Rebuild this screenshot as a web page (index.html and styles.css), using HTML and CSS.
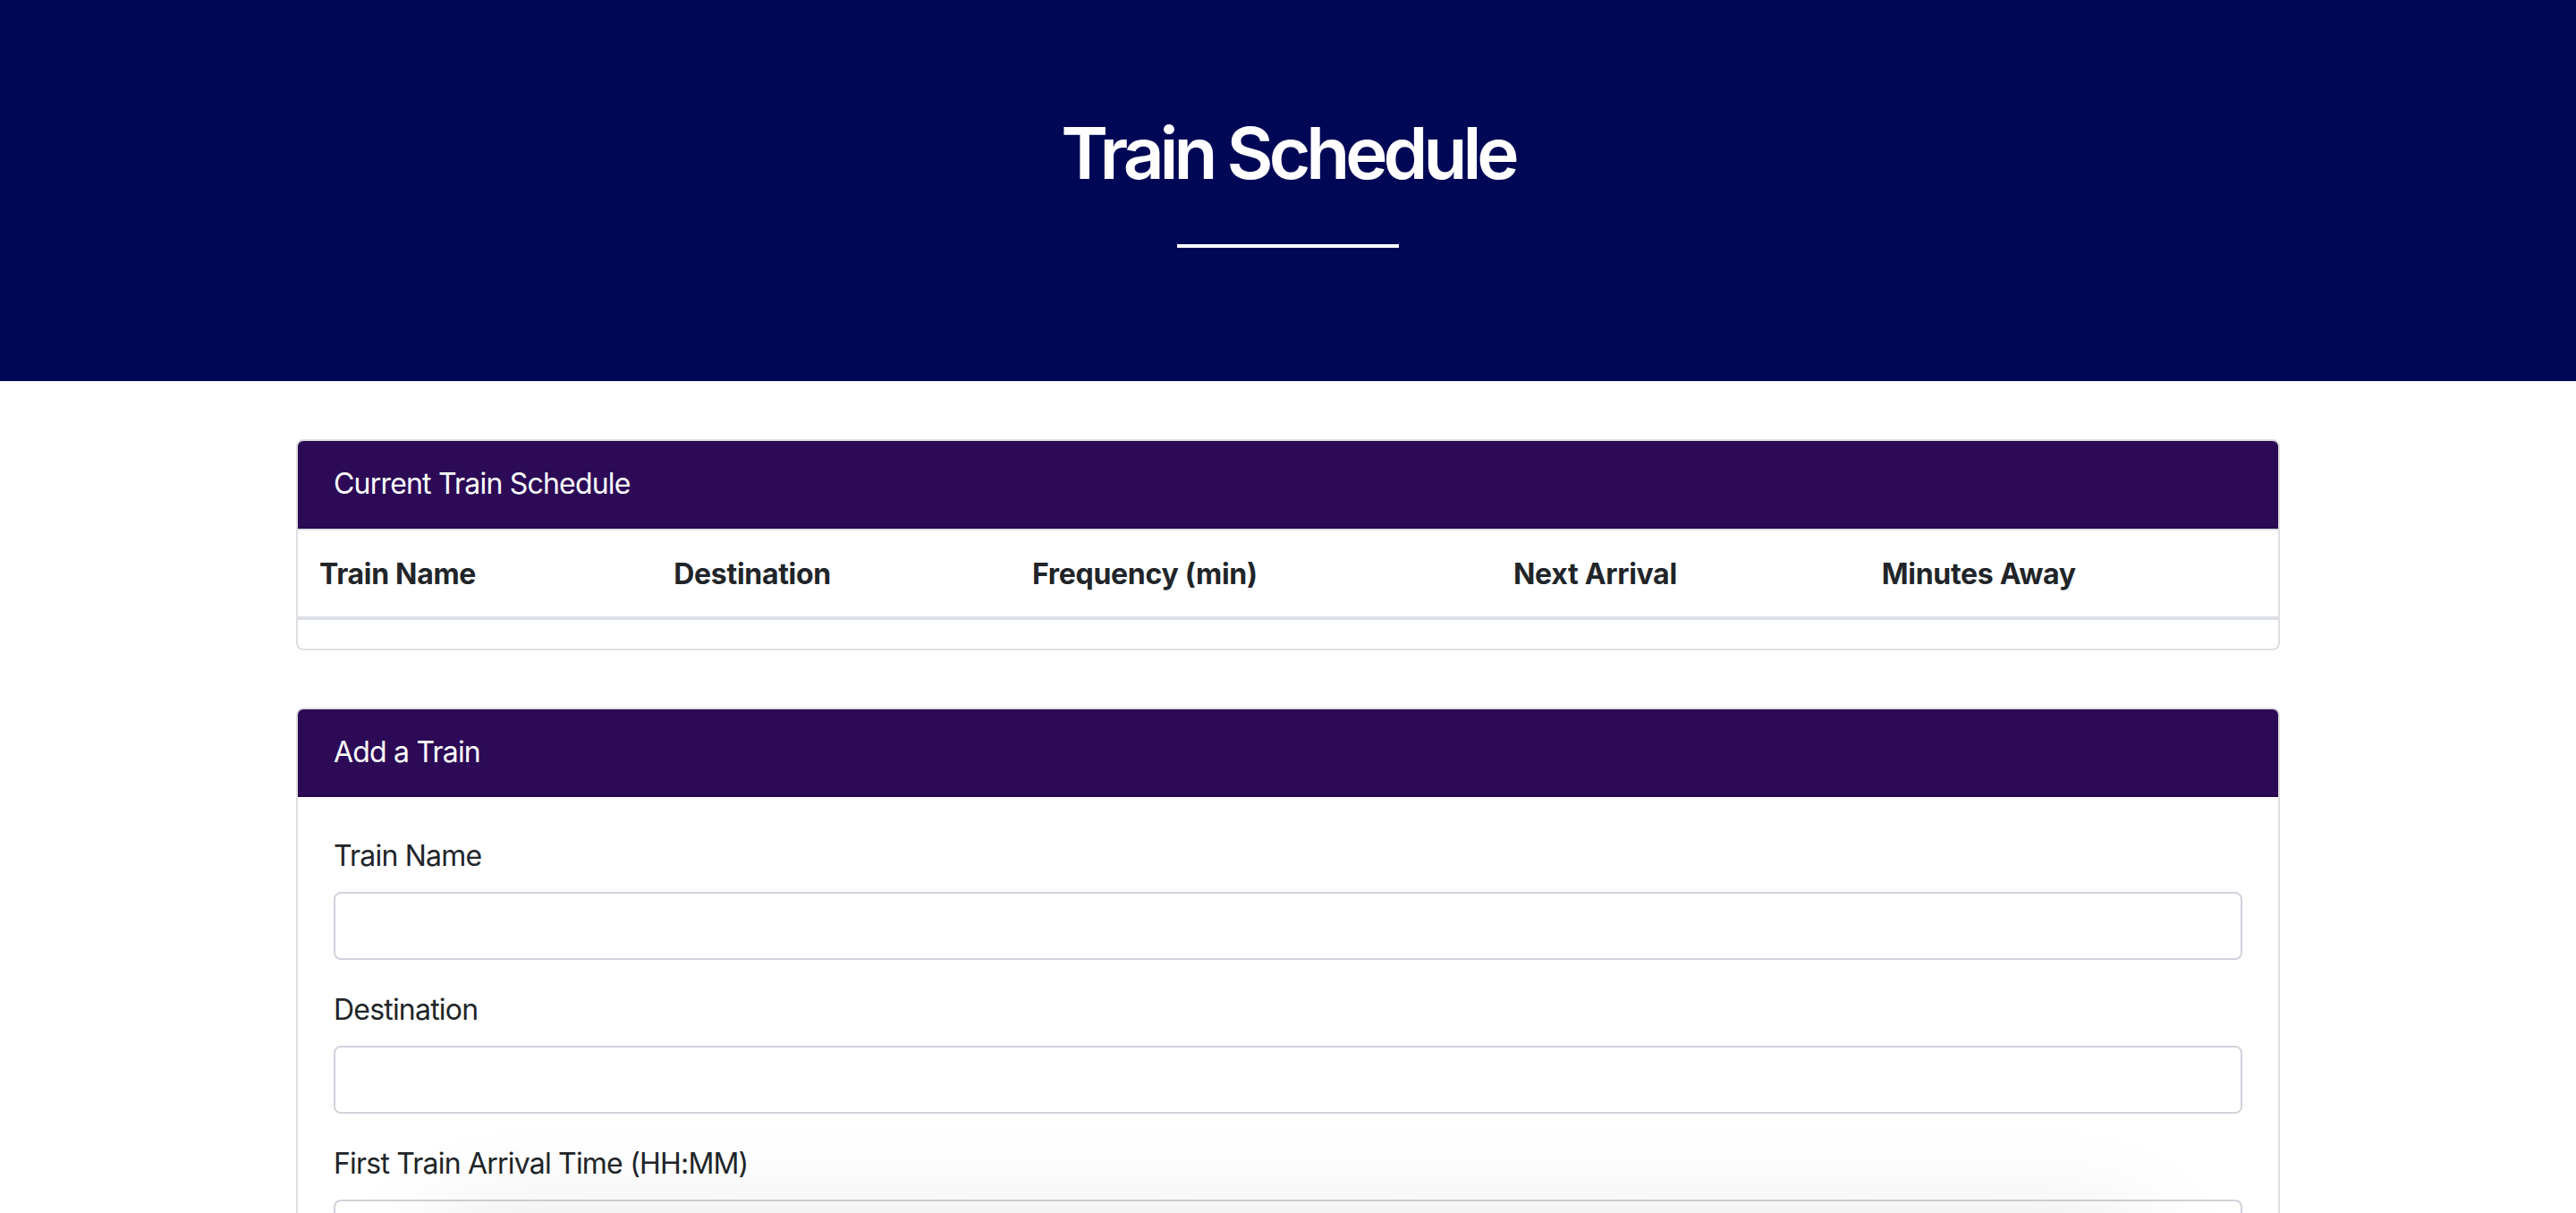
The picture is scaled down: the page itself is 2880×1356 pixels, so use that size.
FILE: index.html
```html
<!DOCTYPE html>
<html lang="en">
<head>
<meta charset="utf-8">
<title>Train Schedule</title>
<link rel="stylesheet" href="styles.css">
</head>
<body>
<header class="hero">
  <h1 class="hero-title">Train Schedule</h1>
  <hr class="hero-rule">
</header>
<main class="container">
  <section class="card">
    <div class="card-header">Current Train Schedule</div>
    <table class="schedule">
      <thead>
        <tr>
          <th class="col-name">Train Name</th>
          <th class="col-dest">Destination</th>
          <th class="col-freq">Frequency (min)</th>
          <th class="col-next">Next Arrival</th>
          <th class="col-away">Minutes Away</th>
        </tr>
      </thead>
      <tbody></tbody>
    </table>
  </section>
  <section class="card card-form">
    <div class="card-header">Add a Train</div>
    <form class="card-body">
      <div class="form-group">
        <label for="train-name">Train Name</label>
        <input id="train-name" class="form-control" type="text">
      </div>
      <div class="form-group">
        <label for="destination">Destination</label>
        <input id="destination" class="form-control" type="text">
      </div>
      <div class="form-group">
        <label for="first-train">First Train Arrival Time (HH:MM)</label>
        <input id="first-train" class="form-control" type="text">
      </div>
      <div class="form-group">
        <label for="frequency">Frequency (min)</label>
        <input id="frequency" class="form-control" type="text">
      </div>
      <button class="btn" type="submit">Submit</button>
    </form>
  </section>
</main>
<div class="bottom-shade"></div>
</body>
</html>
```

FILE: styles.css
```css
* { box-sizing: border-box; }

html, body {
  margin: 0;
  padding: 0;
}

body {
  font-family: Inter, "Liberation Sans", sans-serif;
  font-size: 32px;
  line-height: 48px;
  letter-spacing: -0.8px;
  color: #212529;
  background: #ffffff;
}

.hero {
  background: #000856;
  padding: 123px 0 149px;
  display: flex;
  flex-direction: column;
  align-items: center;
  margin-bottom: 65px;
}

.hero-title {
  margin: 0;
  font-size: 80px;
  line-height: 96px;
  font-weight: 600;
  color: #ffffff;
  letter-spacing: -5px;
}

.hero-rule {
  width: 248px;
  height: 0;
  margin: 54px 0 0;
  border: 0;
  border-top: 4px solid #ffffff;
}

.container {
  width: 2218px;
  margin: 0 auto;
  padding: 0;
}

.card {
  border: 2px solid #dfdfdf;
  border-radius: 8px;
  overflow: hidden;
  background: #fff;
}

.card-form {
  margin-top: 64px;
}

.card-header {
  background: #2c0a56;
  color: #ffffff;
  padding: 24px 40px;
  line-height: 48px;
  border-bottom: 2px solid rgba(0, 0, 0, 0.125);
}

.schedule {
  width: 100%;
  table-layout: fixed;
  border-collapse: collapse;
  margin-bottom: 32px;
}

.schedule th {
  text-align: left;
  font-weight: 700;
  letter-spacing: -0.3px;
  padding: 25px 24px 23px;
  line-height: 48px;
  border-top: 2px solid #dee2e6;
  border-bottom: 4px solid #dee2e6;
}

.col-name { width: 17.9%; }
.col-dest { width: 18.1%; }
.col-freq { width: 24.3%; }
.col-next { width: 18.6%; }
.col-away { width: 21.1%; }

.card-body {
  padding: 42px 40px 40px;
}

.form-group {
  display: flex;
  flex-direction: column;
  margin-bottom: 32px;
}

.form-group label {
  margin-bottom: 16px;
  line-height: 48px;
}

.form-control {
  height: 76px;
  width: 100%;
  border: 2px solid #ced4da;
  border-radius: 8px;
  padding: 12px 24px;
  font: inherit;
  color: #495057;
  background: #fff;
}

.btn {
  font: inherit;
  color: #fff;
  background: #2c0a56;
  border: 0;
  border-radius: 8px;
  padding: 12px 24px;
}

.bottom-shade {
  position: fixed;
  left: 50%;
  bottom: -160px;
  width: 1900px;
  height: 140px;
  margin-left: -950px;
  border-radius: 40px;
  background: #fff;
  box-shadow: 0 0 120px 10px rgba(0, 0, 0, 0.10);
}
```
